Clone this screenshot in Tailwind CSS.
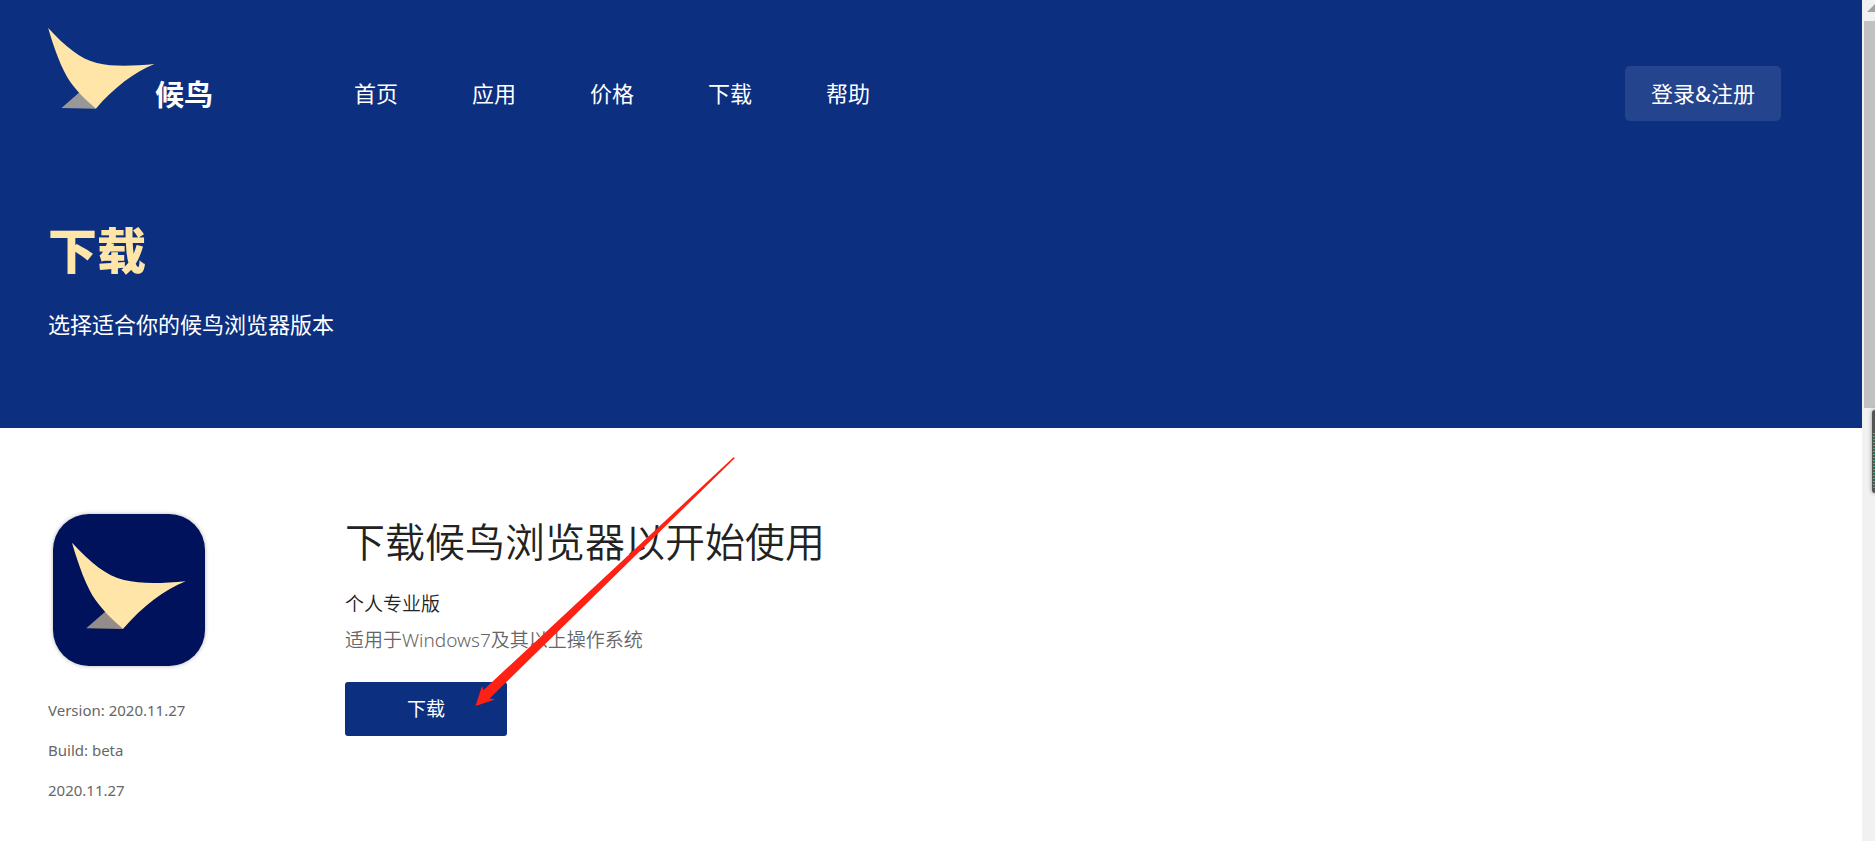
<!DOCTYPE html>
<html lang="zh-CN">
<head>
<meta charset="utf-8">
<title>下载 - 候鸟浏览器</title>
<script src="https://cdn.jsdelivr.net/npm/@tailwindcss/browser@4"></script>
</head>
<body class="bg-white font-['Noto_Sans','Noto_Sans_CJK_SC',sans-serif]">
<svg class="hidden">
  <symbol id="bird" viewBox="54 54 320 243">
    <path d="M148 247 94 294 197 296Z" fill="#ffe6a8" fill-opacity=".58"/>
    <path d="M54 54C105 109 150 147 200 159C250 171 310 168 373 162C315 184 250 234 197 296C168 270 146 250 120 215C95 180 71 113 54 54Z" fill="#ffe6a8"/>
  </symbol>
</svg>
<div class="flex min-h-screen">
  <div class="min-w-0 flex-1">
    <header class="bg-[#0c2f80] pb-[88px] pl-12">
      <div class="flex items-start pr-[81px]">
        <a href="#" class="flex w-[306px] shrink-0 items-end pt-7 text-white">
          <svg class="h-[81px] w-[107px]" aria-hidden="true"><use href="#bird"/></svg>
          <span class="text-[29px] leading-7 font-bold">候鸟</span>
        </a>
        <nav class="flex gap-[74px] pt-[77px] text-[22px] leading-8 text-white">
          <a href="#">首页</a>
          <a href="#">应用</a>
          <a href="#">价格</a>
          <a href="#">下载</a>
          <a href="#">帮助</a>
        </nav>
        <button type="button" class="mt-[66px] ml-auto h-[55px] rounded-[5px] bg-white/10 px-[26px] text-[22px] text-white">登录&amp;注册</button>
      </div>
      <h1 class="mt-[97px] text-[49px] leading-[64px] font-black text-[#ffe6a8]">下载</h1>
      <p class="mt-[26px] text-[22px] leading-8 text-white">选择适合你的候鸟浏览器版本</p>
    </header>
    <main class="flex pt-[86px] pl-12">
      <section class="w-[297px] shrink-0 text-[15px] leading-6 text-[#666]">
        <div class="ml-[5px] flex size-[152px] items-start rounded-[36px] bg-[#00125c] pt-7 pl-[19px] shadow-[0_0_4px_rgba(0,0,0,.3)]">
          <svg class="h-[88px] w-[114px]" aria-label="候鸟"><use href="#bird"/></svg>
        </div>
        <div class="flex flex-col gap-4 pt-8">
          <p>Version: 2020.11.27</p>
          <p>Build: beta</p>
          <p>2020.11.27</p>
        </div>
      </section>
      <section class="relative text-[19px] leading-7 font-[350] text-[#222]">
        <h2 class="text-[40px] leading-[56px]">下载候鸟浏览器以开始使用</h2>
        <p class="mt-5">个人专业版</p>
        <p class="mt-2 text-[#666]">适用于Windows7及其以上操作系统</p>
        <button type="button" class="mt-7 h-[54px] w-[162px] rounded-[3px] bg-[#0c2f80] font-normal text-white">下载</button>
        <svg class="pointer-events-none absolute -top-[57px] left-[130px]" width="262" height="250" viewBox="475 458 262 250" aria-hidden="true">
          <path d="M475.5 707 482 687 483.500 691 733.500 458.300 735 459 489.500 699.500 495 700.500Z" fill="#ff2114"/>
        </svg>
      </section>
    </main>
  </div>
  <div class="relative w-[13px] shrink-0 overflow-hidden bg-[#f1f1f1]" aria-hidden="true">
    <svg class="h-[21px] w-[13px]" viewBox="0 0 13 21"><path d="M5 12 13 4V12Z" fill="#a3a3a3"/></svg>
    <div class="ml-[2px] h-[387px] bg-[#c1c1c1]"></div>
    <div class="absolute top-[410px] left-[10px] flex h-[83px] w-2 flex-col rounded-l-[3px] bg-[#555] pt-[23px] pl-px shadow-[0_0_4px_rgba(0,0,0,.4)]">
      <div class="h-14 bg-[repeating-linear-gradient(#3fbf6b_0_1px,#555_1px_3px)]"></div>
    </div>
  </div>
</div>
</body>
</html>
